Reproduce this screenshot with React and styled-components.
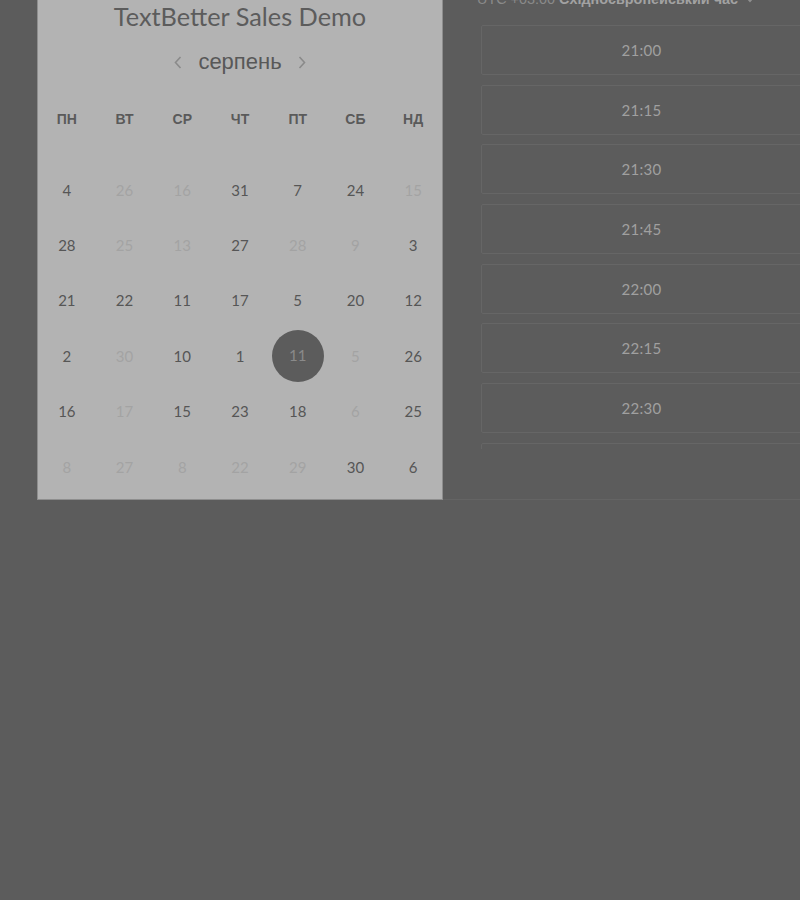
import React from "react";
import styled, { createGlobalStyle } from "styled-components";

const GlobalStyle = createGlobalStyle`
  html, body {
    margin: 0;
    padding: 0;
    background: #5c5c5c;
    overflow: hidden;
  }
`;

const weekDays = ["пн", "вт", "ср", "чт", "пт", "сб", "нд"];

// [number, state] -- 1 marks a day that cannot be booked, 2 the chosen one
const weeks = [
  [[4], [26, 1], [16, 1], [31], [7], [24], [15, 1]],
  [[28], [25, 1], [13, 1], [27], [28, 1], [9, 1], [3]],
  [[21], [22], [11], [17], [5], [20], [12]],
  [[2], [30, 1], [10], [1], [11, 2], [5, 1], [26]],
  [[16], [17, 1], [15], [23], [18], [6, 1], [25]],
  [[8, 1], [27, 1], [8, 1], [22, 1], [29, 1], [30], [6]],
];

const slots = ["21:00", "21:15", "21:30", "21:45", "22:00", "22:15", "22:30", "22:45"];

function App() {
  return (
    <>
      <GlobalStyle />
      <Page>
        <CalendarPanel>
          <Title>TextBetter Sales Demo</Title>
          <MonthNav>
            <ArrowBtn>
              <svg width="8" height="13" viewBox="0 0 8 13">
                <path d="M6.5 1 L1.5 6.5 L6.5 12" fill="none" stroke="#8a8a8a" strokeWidth="1.6" />
              </svg>
            </ArrowBtn>
            <MonthName>серпень</MonthName>
            <ArrowBtn>
              <svg width="8" height="13" viewBox="0 0 8 13">
                <path d="M1.5 1 L6.5 6.5 L1.5 12" fill="none" stroke="#8a8a8a" strokeWidth="1.6" />
              </svg>
            </ArrowBtn>
          </MonthNav>
          <WeekHeader>
            {weekDays.map((d) => (
              <WeekDay key={d}>{d}</WeekDay>
            ))}
          </WeekHeader>
          <DayGrid>
            {weeks.map((week, wi) =>
              week.map(([num, state], di) => (
                <DayCell key={wi + "-" + di}>
                  {state === 2 ? (
                    <Selected>{num}</Selected>
                  ) : (
                    <DayNum $off={state === 1}>{num}</DayNum>
                  )}
                </DayCell>
              ))
            )}
          </DayGrid>
        </CalendarPanel>
        <TimePanel>
          <TimeZone>
            UTC +03:00 <b>Східноєвропейський час</b>
            <svg width="8" height="6" viewBox="0 0 8 6">
              <path d="M1 1 L4 4.5 L7 1" fill="none" stroke="#8f8f8f" strokeWidth="1.3" />
            </svg>
          </TimeZone>
          <SlotList>
            {slots.map((s) => (
              <Slot key={s}>{s}</Slot>
            ))}
          </SlotList>
        </TimePanel>
      </Page>
    </>
  );
}

const Page = styled.div`
  display: flex;
  align-items: flex-start;
  padding-left: 37px;
  width: 800px;
  height: 900px;
  box-sizing: border-box;
`;

const CalendarPanel = styled.div`
  width: 406px;
  height: 500px;
  box-sizing: border-box;
  background: #b3b3b3;
  border: 1px solid #8e8e8e;
  border-top: none;
  flex-shrink: 0;
`;

const Title = styled.div`
  font-family: Lato, "Liberation Sans", sans-serif;
  font-size: 25.3px;
  line-height: 32px;
  color: #5c5c5c;
  text-align: center;
`;

const MonthNav = styled.div`
  display: flex;
  align-items: center;
  justify-content: center;
  gap: 16px;
  height: 30px;
  margin-top: 15px;
`;

const ArrowBtn = styled.span`
  display: flex;
  align-items: center;
`;

const MonthName = styled.span`
  font-family: "Liberation Sans", Arial, sans-serif;
  font-size: 22px;
  color: #585858;
`;

const WeekHeader = styled.div`
  display: grid;
  grid-template-columns: repeat(7, 1fr);
  height: 55.4px;
  margin-top: 14px;
`;

const WeekDay = styled.div`
  display: flex;
  align-items: center;
  justify-content: center;
  font-family: "Liberation Sans", Arial, sans-serif;
  font-weight: bold;
  font-size: 14px;
  text-transform: uppercase;
  color: #5a5a5a;
`;

const DayGrid = styled.div`
  display: grid;
  grid-template-columns: repeat(7, 1fr);
  grid-auto-rows: 55.4px;
  margin-top: 15.6px;
`;

const DayCell = styled.div`
  display: flex;
  align-items: center;
  justify-content: center;
`;

const DayNum = styled.span`
  font-family: Lato, "Liberation Sans", sans-serif;
  font-size: 15px;
  color: ${(p) => (p.$off ? "#a3a3a3" : "#565656")};
`;

const Selected = styled.span`
  width: 52px;
  height: 52px;
  border-radius: 50%;
  background: #5c5c5c;
  color: #8a8a8a;
  display: flex;
  align-items: center;
  justify-content: center;
  font-family: Lato, "Liberation Sans", sans-serif;
  font-size: 15px;
  padding-bottom: 2px;
  box-sizing: border-box;
`;

const TimePanel = styled.div`
  flex: 1;
  height: 500px;
  box-sizing: border-box;
  border-bottom: 1px solid #646464;
  padding-left: 38px;
  margin-right: -2px;
`;

const TimeZone = styled.div`
  margin-top: -13px;
  height: 24px;
  margin-left: -4px;
  font-family: "Liberation Sans", Arial, sans-serif;
  font-size: 14.4px;
  line-height: 24px;
  color: #8a8a8a;
  white-space: nowrap;

  b {
    color: #a2a2a2;
  }

  svg {
    margin-left: 8px;
    vertical-align: middle;
  }
`;

const SlotList = styled.div`
  margin-top: 14px;
  height: 424px;
  overflow: hidden;
  display: flex;
  flex-direction: column;
  gap: 9.7px;
`;

const Slot = styled.div`
  flex-shrink: 0;
  height: 50px;
  box-sizing: border-box;
  border: 1px solid #666666;
  border-radius: 2px;
  display: flex;
  align-items: center;
  justify-content: center;
  font-family: Lato, "Liberation Sans", sans-serif;
  font-size: 15px;
  letter-spacing: 0.3px;
  color: #a0a0a0;
`;

export default App;
